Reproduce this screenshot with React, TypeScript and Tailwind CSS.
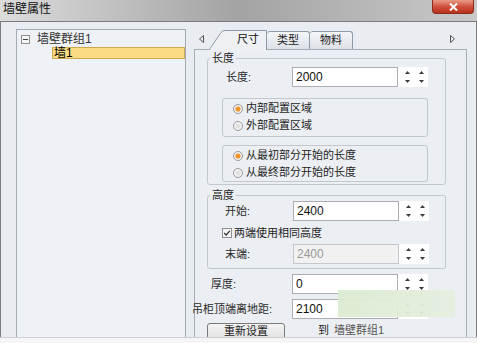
import type { ReactNode } from "react";

function Tri({ up }: { up?: boolean }) {
  return (
    <svg width="5" height="3" viewBox="0 0 5 3" className="block">
      <path d={up ? "M2.5 0 L5 3 L0 3 Z" : "M0 0 L5 0 L2.5 3 Z"} fill="#3c3c3c" />
    </svg>
  );
}

function Spinner() {
  return (
    <div className="flex h-[20px] w-[30px] gap-[9px] bg-white pl-[7px] pt-[4px]">
      {[0, 1].map((i) => (
        <div key={i} className="flex flex-col gap-[6px]">
          <Tri up />
          <Tri />
        </div>
      ))}
    </div>
  );
}

function Field({ value, disabled }: { value: string; disabled?: boolean }) {
  return (
    <div className="flex">
      <div
        className={`h-[20px] w-[106px] border px-[3px] text-[12px] leading-[18px] ${
          disabled
            ? "border-[#c4c8ce] bg-[#f1f1f1] text-[#9a9a9a]"
            : "border-[#abadb3] bg-white text-[#111]"
        }`}
      >
        {value}
      </div>
      <Spinner />
    </div>
  );
}

function Row({ label, labelClass, value, disabled }: { label: string; labelClass: string; value: string; disabled?: boolean }) {
  return (
    <div className="flex items-center">
      <div className={`whitespace-nowrap text-[11px] text-[#2a2a2a] ${labelClass}`}>{label}</div>
      <Field value={value} disabled={disabled} />
    </div>
  );
}

function Radio({ on, children }: { on?: boolean; children: ReactNode }) {
  return (
    <div className="flex h-[17px] items-center gap-[3px] text-[11px] text-[#1e1e1e]">
      <svg width="10" height="10" viewBox="0 0 10 10">
        <circle cx="5" cy="5" r="4.5" fill="#f3f3f3" stroke="#9a9a9a" />
        {on ? <circle cx="5" cy="5" r="2.6" fill="#f0952a" /> : <circle cx="5" cy="5" r="2.6" fill="#e2e2e2" />}
      </svg>
      <span>{children}</span>
    </div>
  );
}

function Group({ title, className, children }: { title: string; className: string; children: ReactNode }) {
  return (
    <fieldset className={`rounded-[3px] border border-[#c3c8cf] ${className}`}>
      <legend className="ml-[2px] px-[2px] text-[11px] leading-[13px] text-[#1e1e1e]">{title}</legend>
      {children}
    </fieldset>
  );
}

export default function App() {
  return (
    <div className="relative h-[343px] w-[477px] overflow-hidden bg-[#f4f4f4] font-['Liberation_Sans','Noto_Sans_CJK_SC',sans-serif]">
      {/* title bar */}
      <div className="flex h-[21px] items-start justify-between bg-gradient-to-r from-[#dcdcdc] via-[#a3a3a3] to-[#c9c9c9]">
        <div className="pl-[3px] pt-[2px] text-[12px] leading-[14px] text-[#111]">墙壁属性</div>
        <div className="mr-[3px] flex h-[14px] w-[42px] items-center justify-center rounded-b-[4px] border border-t-0 border-[#8c2a1c] bg-gradient-to-b from-[#e89a88] via-[#d0503c] to-[#b8321f]">
          <svg width="9" height="8" viewBox="0 0 9 8">
            <path d="M1 0.5 L8 7.5 M8 0.5 L1 7.5" stroke="#fff" strokeWidth="2" />
          </svg>
        </div>
      </div>

      {/* body */}
      <div className="flex h-[316px] gap-[8px] overflow-hidden border-x border-t border-[#7c7c7c] bg-[#e9ecf1] pl-[15px] pt-[7px]">
        {/* tree */}
        <div className="h-[320px] w-[170px] shrink-0 border border-[#a4abb4] bg-[#eef1f5] pt-[2px] text-[12px] text-[#1a1a1a]">
          <div className="flex h-[14px] items-center pl-[4px]">
            <svg width="9" height="9" viewBox="0 0 9 9">
              <rect x="0.5" y="0.5" width="8" height="8" fill="#f6f6f6" stroke="#8e8e8e" />
              <path d="M2 4.5 H7" stroke="#444" />
            </svg>
            <span className="ml-[7px] leading-[14px] text-[#333]">墙壁群组1</span>
          </div>
          <div className="ml-[35px] mt-[1px] h-[12px] border border-[#cfa94f] bg-[#f9dc83] pl-[1px] text-[12px] leading-[10px] text-black">
            墙1
          </div>
        </div>

        {/* right panel */}
        <div className="flex w-[273px] shrink-0 flex-col">
          <div className="relative z-10 -mb-px flex h-[21px] items-end">
            <div className="flex h-full w-[15px] items-center justify-center pb-[2px]">
              <svg width="5" height="8" viewBox="0 0 5 8">
                <path d="M4.5 0.5 L0.5 4 L4.5 7.5 Z" fill="none" stroke="#555" />
              </svg>
            </div>
            <div className="relative flex h-[21px] w-[58px] items-center justify-center pl-[20px] text-[11px] text-[#111]">
              <svg width="58" height="21" viewBox="0 0 58 21" className="absolute inset-0">
                <path d="M0 21 L12 3.5 Q13.5 1.5 16 1.5 L57.5 1.5 L57.5 21" fill="#eef0f4" stroke="#8f9aa7" />
              </svg>
              <span className="relative">尺寸</span>
            </div>
            <div className="mb-px flex h-[18px] w-[43px] items-center justify-center rounded-t-[3px] border border-b-0 border-l-0 border-[#8f9aa7] bg-gradient-to-b from-[#f3f5f8] to-[#dde1e7] text-[11px] text-[#222]">
              类型
            </div>
            <div className="mb-px flex h-[18px] w-[43px] items-center justify-center rounded-t-[3px] border border-b-0 border-l-0 border-[#8f9aa7] bg-gradient-to-b from-[#f3f5f8] to-[#dde1e7] text-[11px] text-[#222]">
              物料
            </div>
            <div className="flex-1" />
            <div className="flex h-full w-[30px] items-center justify-center pb-[2px]">
              <svg width="5" height="8" viewBox="0 0 5 8">
                <path d="M0.5 0.5 L4.5 4 L0.5 7.5 Z" fill="none" stroke="#555" />
              </svg>
            </div>
          </div>

          <div className="flex flex-1 flex-col border border-[#a5adb7] bg-[#ebeef2] pt-[2px]">
            <Group title="长度" className="ml-[12px] w-[239px] pb-[2px]">
              <div className="ml-[18px] mt-[2px]">
                <Row label="长度:" labelClass="w-[66px]" value="2000" />
              </div>
              <div className="ml-[14px] mt-[11px] h-[39px] w-[206px] rounded-[3px] border border-[#c3c8cf] pl-[10px] pt-[1px]">
                <Radio on>内部配置区域</Radio>
                <Radio>外部配置区域</Radio>
              </div>
              <div className="ml-[14px] mt-[8px] h-[37px] w-[206px] rounded-[3px] border border-[#c3c8cf] pl-[10px] pt-px">
                <Radio on>从最初部分开始的长度</Radio>
                <Radio>从最终部分开始的长度</Radio>
              </div>
            </Group>

            <Group title="高度" className="ml-[12px] mt-[4px] w-[239px] pb-[4px]">
              <div className="-mt-px ml-[17px]">
                <Row label="开始:" labelClass="w-[68px]" value="2400" />
              </div>
              <div className="ml-[14px] mt-px flex h-[22px] items-center gap-[2px] text-[11px] text-[#1e1e1e]">
                <svg width="10" height="10" viewBox="0 0 10 10">
                  <rect x="0.5" y="0.5" width="9" height="9" fill="#f5f5f5" stroke="#8e8e8e" />
                  <path d="M2.2 5 L4.2 7 L7.8 2.8" fill="none" stroke="#333" strokeWidth="1.2" />
                </svg>
                <span>两端使用相同高度</span>
              </div>
              <div className="ml-[17px]">
                <Row label="末端:" labelClass="w-[68px]" value="2400" disabled />
              </div>
            </Group>

            <div className="ml-[16px] mt-[5px]">
              <Row label="厚度:" labelClass="w-[81px]" value="0" />
            </div>
            <div className="-ml-[3px] mt-[5px]">
              <Row label="吊柜顶端离地距:" labelClass="w-[100px]" value="2100" />
            </div>
            <div className="mt-[4px] flex items-start">
              <div className="ml-[12px] flex h-[22px] w-[78px] items-start justify-center rounded-[3px] border border-[#7a7a7a] bg-gradient-to-b from-[#f4f4f4] to-[#dadada] pt-[1px] text-[11px] leading-[13px] text-[#1a1a1a]">
                重新设置
              </div>
              <div className="ml-[33px] mt-[1px] flex gap-[5px] text-[11px] leading-[13px]">
                <span className="text-[#1a1a1a]">到</span>
                <span className="text-[#555]">墙壁群组1</span>
              </div>
            </div>
          </div>
        </div>
      </div>
      <div className="h-[6px] border-t border-[#cdd0d4] bg-[#f5f5f5]" />

      {/* watermark overlay */}
      <div className="absolute left-[338px] top-[290px] h-[27px] w-[117px] bg-gradient-to-r from-[#dcecd2] to-[#e6efe0] opacity-95 blur-[0.5px]" />
    </div>
  );
}
